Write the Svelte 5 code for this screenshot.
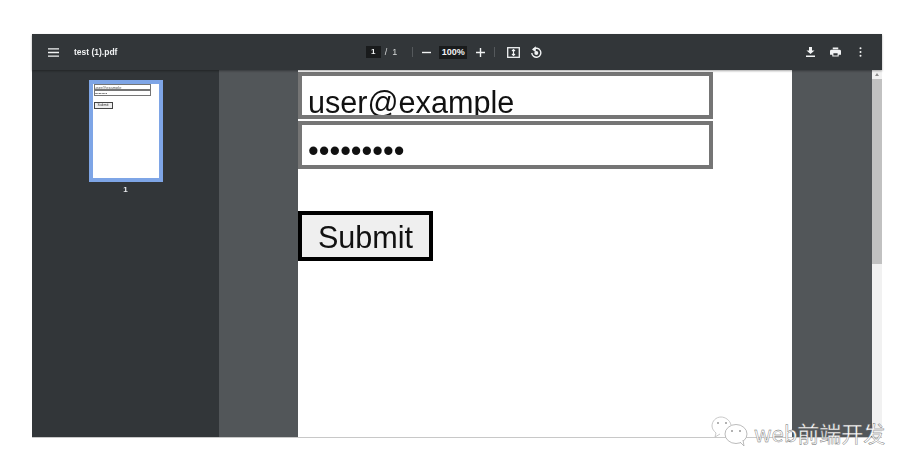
<script lang="ts">
  const password = "•••••••••";
</script>

<div class="shot">
  <div class="viewer">
    <header class="toolbar">
      <div class="left">
        <button class="icon-btn" aria-label="Menu">
          <svg width="11" height="9" viewBox="0 0 11 9"><path d="M0 .8h11M0 4.500h11M0 8.200h11" stroke="#f1f3f4" stroke-width="1.300" /></svg>
        </button>
        <span class="title">test (1).pdf</span>
      </div>
      <div class="center">
        <span class="page-num">1</span>
        <span class="page-total">/ &nbsp;1</span>
        <span class="sep"></span>
        <svg class="zoom-out" width="9" height="9" viewBox="0 0 9 9"><path d="M0 4.500h9" stroke="#f1f3f4" stroke-width="1.400" /></svg>
        <span class="zoom-val">100%</span>
        <svg class="zoom-in" width="9" height="9" viewBox="0 0 9 9"><path d="M0 4.500h9M4.500 0v9" stroke="#f1f3f4" stroke-width="1.400" /></svg>
        <span class="sep sep2"></span>
        <svg class="fit" width="13" height="11" viewBox="0 0 13 11"><rect x="0.700" y="0.700" width="11.600" height="9.600" fill="none" stroke="#f1f3f4" stroke-width="1.300" /><path d="M6.500 2.500v6M5 4l1.500-1.500L8 4M5 7l1.500 1.500L8 7" fill="none" stroke="#f1f3f4" stroke-width="1.100" /></svg>
        <svg class="rotate" width="12" height="13" viewBox="0 0 12 13"><path d="M3.200 3.500a4.500 4.500 0 1 1-1.400 3.500" fill="none" stroke="#f1f3f4" stroke-width="1.400" /><path d="M5.800 0.300L2 3.500l3.800 2.700z" fill="#f1f3f4" /><circle cx="6.300" cy="7" r="2" fill="#f1f3f4" /></svg>
      </div>
      <div class="right">
        <svg width="9" height="10" viewBox="0 0 9 10"><path d="M3 0h3v3.500h2.500L4.500 7 .5 3.500H3zM0 8.600h9V10H0z" fill="#f1f3f4" /></svg>
        <svg class="print" width="11" height="10" viewBox="0 0 12 10"><path d="M3 0h6v2H3zM1.500 2.600h9A1.500 1.500 0 0 1 12 4.100V8H9.500v2h-7V8H0V4.100a1.500 1.500 0 0 1 1.500-1.500zM3.700 6.300v2.500h4.600V6.300z" fill="#f1f3f4" /></svg>
        <svg class="more" width="3" height="10" viewBox="0 0 3 10"><circle cx="1.500" cy="1.200" r="1" fill="#f1f3f4" /><circle cx="1.500" cy="5" r="1" fill="#f1f3f4" /><circle cx="1.500" cy="8.800" r="1" fill="#f1f3f4" /></svg>
      </div>
    </header>

    <div class="body">
      <aside class="sidebar">
        <div class="thumb">
          <div class="thumb-field">user@example</div>
          <div class="thumb-field">•••••••••</div>
          <div class="thumb-submit">Submit</div>
        </div>
        <span class="thumb-label">1</span>
      </aside>

      <main class="content">
        <div class="page">
          <div class="field"><span class="clip">user@example</span></div>
          <div class="field pass"><span>{password}</span></div>
          <div class="submit">Submit</div>
        </div>
      </main>

      <div class="scrollbar">
        <div class="arrow"></div>
        <div class="thumb-bar"></div>
      </div>
    </div>
  </div>

  <div class="watermark">
    <svg width="38" height="32" viewBox="0 0 38 32">
      <path d="M20 9C19 4 14 1 10 1 5 1 1 5 1 10c0 3 2 5 4 7l-1 4 5-3" fill="#fff" stroke="#bbb" stroke-width="0.800" />
      <ellipse cx="25" cy="18" rx="11" ry="9.500" fill="#fff" stroke="#aaa" stroke-width="0.800" />
      <path d="M29 26l4 4-1-6" fill="#fff" stroke="#aaa" stroke-width="0.800" />
      <circle cx="7" cy="7" r="1" fill="#999" /><circle cx="15" cy="7" r="1" fill="#999" />
      <circle cx="21" cy="15" r="1" fill="#999" /><circle cx="29" cy="15" r="1" fill="#999" />
    </svg>
    <span>web前端开发</span>
  </div>
</div>

<style>
  :global(body) {
    background: #fff;
  }

  .shot {
    position: relative;
    width: 915px;
    height: 474px;
    padding: 34px 33px 36px 32px;
    box-sizing: border-box;
    overflow: hidden;
    font-family: "Liberation Sans", Arial, sans-serif;
  }

  .viewer {
    display: flex;
    flex-direction: column;
    height: 403px;
    border-bottom: 1px solid #c8c8c8;
  }

  .toolbar {
    flex: none;
    height: 36px;
    background: #323639;
    display: grid;
    grid-template-columns: 1fr auto 1fr;
    align-items: center;
    color: #f1f3f4;
    box-shadow: 0 1px 2px rgba(0, 0, 0, 0.35);
    position: relative;
    z-index: 1;
  }

  /* the source is a soft video frame */
  .left,
  .center,
  .right,
  .thumb,
  .thumb-label {
    filter: blur(0.45px);
  }

  .field,
  .submit {
    filter: blur(0.3px);
  }

  .left {
    display: flex;
    align-items: center;
    padding-left: 16px;
    gap: 15px;
  }

  .icon-btn {
    display: flex;
    background: none;
    border: 0;
    padding: 0;
  }

  .title {
    font-size: 8.500px;
    font-weight: 700;
  }

  .center {
    display: flex;
    align-items: center;
    font-size: 8px;
    padding-right: 6px;
  }

  .page-num {
    width: 15px;
    height: 12px;
    background: #191b1c;
    text-align: center;
    line-height: 12px;
    font-weight: 700;
  }

  .page-total {
    margin-left: 4px;
    font-size: 9px;
    color: #d5d7d8;
  }

  .sep {
    width: 1px;
    height: 10px;
    background: #55595c;
    margin: 0 9px 0 15px;
  }

  .zoom-val {
    width: 28px;
    height: 13px;
    line-height: 13px;
    background: #191b1c;
    font-size: 9px;
    text-align: center;
    margin: 0 9px 0 8px;
    font-weight: 700;
  }

  .sep2 {
    margin: 0 12px 0 9px;
  }

  .rotate {
    margin-left: 10px;
  }

  .right {
    display: flex;
    align-items: center;
    justify-content: flex-end;
    padding-right: 20px;
  }

  .print {
    margin-left: 15px;
  }

  .more {
    margin-left: 18px;
  }

  .body {
    flex: 1;
    min-height: 0;
    display: flex;
  }

  .sidebar {
    flex: none;
    width: 187px;
    background: #323639;
    display: flex;
    flex-direction: column;
    align-items: center;
    padding-top: 10px;
    box-sizing: border-box;
  }

  .thumb {
    width: 66px;
    height: 94px;
    background: #fff;
    border: 4px solid #7ea5e6;
    display: flex;
    flex-direction: column;
    align-items: flex-start;
    overflow: hidden;
  }

  .thumb-field {
    width: 55px;
    height: 4px;
    margin-left: 1px;
    border: 1px solid #757575;
    font-size: 4px;
    line-height: 6px;
    color: #555;
    overflow: hidden;
  }

  .thumb-submit {
    margin: 6px 0 0 1px;
    width: 17px;
    height: 5px;
    border: 1px solid #444;
    background: #efefef;
    font-size: 3.500px;
    line-height: 5px;
    text-align: center;
    color: #333;
  }

  .thumb-label {
    margin-top: 3px;
    font-size: 8px;
    font-weight: 700;
    color: #e8eaed;
  }

  .content {
    flex: 1;
    min-width: 0;
    background: #525659;
    display: flex;
    justify-content: center;
    overflow: hidden;
    padding-right: 1px;
  }

  .page {
    width: 494px;
    background: #fff;
    display: flex;
    flex-direction: column;
    align-items: flex-start;
    padding-top: 2px;
    box-sizing: border-box;
  }

  .field {
    width: 415px;
    height: 47px;
    box-sizing: border-box;
    border: 4px solid #757575;
    overflow: hidden;
    padding-left: 6px;
    font-size: 30.600px;
    line-height: 32px;
    color: #111;
    display: flex;
    align-items: flex-end;
  }

  .clip {
    position: relative;
    top: 3px;
    display: block;
    height: 32px;
  }

  .pass {
    margin-top: 2px;
    height: 48px;
  }

  .pass span {
    display: block;
    position: relative;
    top: 1px;
  }

  .submit {
    margin-top: 42px;
    width: 135px;
    height: 50px;
    box-sizing: border-box;
    border: 4px solid #000;
    background: #efefef;
    font-size: 30.600px;
    line-height: 44px;
    text-align: center;
    color: #111;
  }

  .scrollbar {
    flex: none;
    width: 10px;
    background: #f1f1f1;
    display: flex;
    flex-direction: column;
    align-items: center;
  }

  .arrow {
    margin-top: 3px;
    border: 2.500px solid transparent;
    border-top: 0;
    border-bottom: 3px solid #8a8a8a;
  }

  .thumb-bar {
    margin-top: 3px;
    width: 100%;
    height: 185px;
    background: #c1c1c1;
  }

  /* wechat mark sits over the viewer corner */
  .watermark {
    position: absolute;
    left: 711px;
    top: 416px;
    display: flex;
    align-items: center;
    gap: 5px;
    font-family: "Noto Sans CJK SC", sans-serif;
    font-size: 22px;
    line-height: 32px;
    color: #fff;
    -webkit-text-stroke: 0.4px #666;
  }
</style>
